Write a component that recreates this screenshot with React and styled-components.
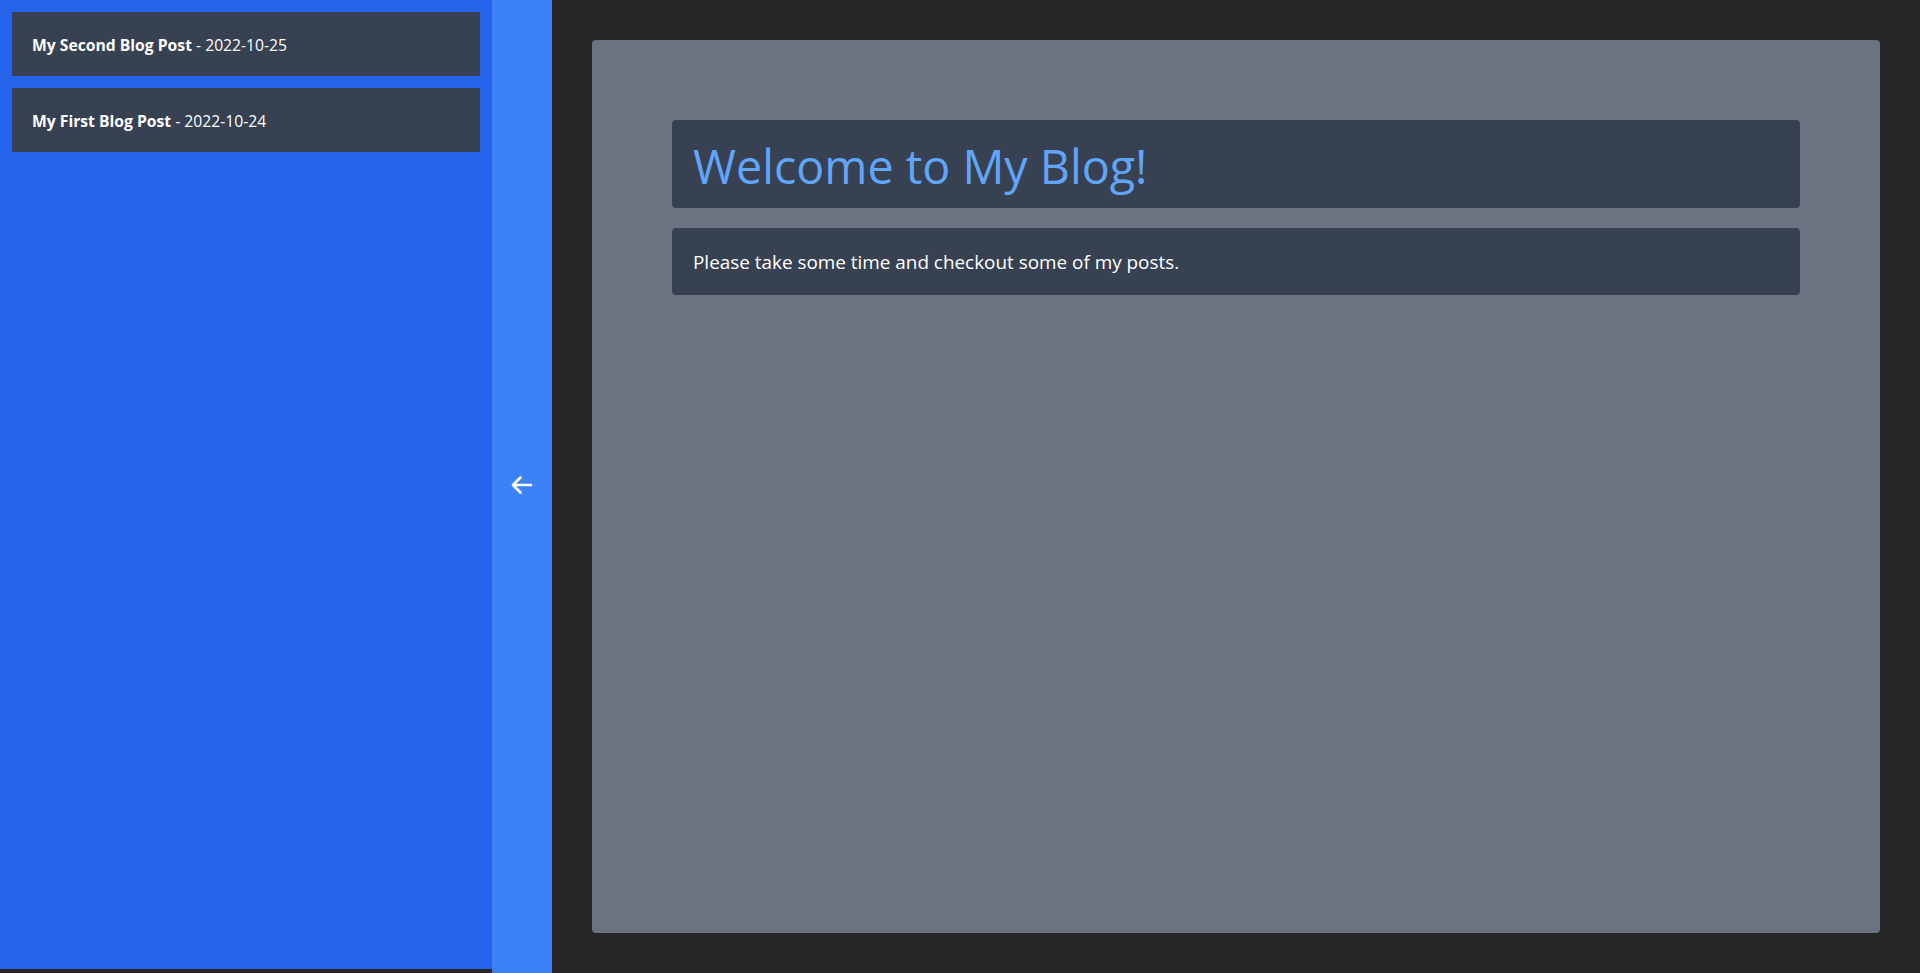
import React from "react";
import styled, { createGlobalStyle } from "styled-components";

const GlobalStyle = createGlobalStyle`
  html, body {
    margin: 0;
    padding: 0;
    background: #262626;
    font-family: "Open Sans", "Noto Sans", sans-serif;
    overflow: hidden;
  }
  * {
    box-sizing: border-box;
  }
`;

const Layout = styled.div`
  display: flex;
  height: 100vh;
  background: #262626;
`;

const Sidebar = styled.aside`
  width: 492px;
  height: calc(100vh - 4px);
  background: #2563eb;
  padding: 12px;
  display: flex;
  flex-direction: column;
  gap: 12px;
`;

const PostLink = styled.a`
  display: block;
  background: #374151;
  color: #ffffff;
  padding: 21px 20px 19px 20px;
  font-size: 15.7px;
  line-height: 24px;
  text-decoration: none;
  cursor: pointer;
`;

const PostTitle = styled.span`
  font-weight: 700;
`;

const Toggle = styled.button`
  width: 60px;
  height: 100vh;
  border: none;
  background: #3b82f6;
  color: #ffffff;
  display: flex;
  align-items: center;
  justify-content: center;
  padding: 0 0 4px;
  cursor: pointer;
`;

const Main = styled.main`
  flex: 1;
  padding: 40px;
`;

const Card = styled.section`
  height: 100%;
  background: #6b7280;
  border-radius: 4px;
  padding: 80px;
  display: flex;
  flex-direction: column;
  gap: 20px;
`;

const Panel = styled.div`
  background: #374151;
  border-radius: 4px;
  padding: ${(p) => (p.$title ? "22px 20px 18px 21px" : "21px 20px 19px 21px")};
`;

const Heading = styled.h1`
  margin: 0;
  color: #60a5fa;
  font-size: 46.6px;
  font-weight: 400;
  line-height: 48px;
`;

const Intro = styled.p`
  margin: 0;
  color: #ffffff;
  font-size: 18.9px;
  line-height: 27px;
`;

const posts = [
  { title: "My Second Blog Post", date: "2022-10-25" },
  { title: "My First Blog Post", date: "2022-10-24" },
];

const ArrowLeft = () => (
  <svg width="24" height="24" viewBox="0 0 24 24" fill="none" stroke="currentColor" strokeWidth="2.7" strokeLinecap="round" strokeLinejoin="round">
    <path d="M10.5 19.5 3 12m0 0 7.5-7.5M3 12h18" />
  </svg>
);

export default function App() {
  return (
    <>
      <GlobalStyle />
      <Layout>
        <Sidebar>
          {posts.map((p) => (
            <PostLink key={p.title}>
              <PostTitle>{p.title}</PostTitle> - {p.date}
            </PostLink>
          ))}
        </Sidebar>
        <Toggle aria-label="Collapse sidebar">
          <ArrowLeft />
        </Toggle>
        <Main>
          <Card>
            <Panel $title>
              <Heading>Welcome to My Blog!</Heading>
            </Panel>
            <Panel>
              <Intro>Please take some time and checkout some of my posts.</Intro>
            </Panel>
          </Card>
        </Main>
      </Layout>
    </>
  );
}
